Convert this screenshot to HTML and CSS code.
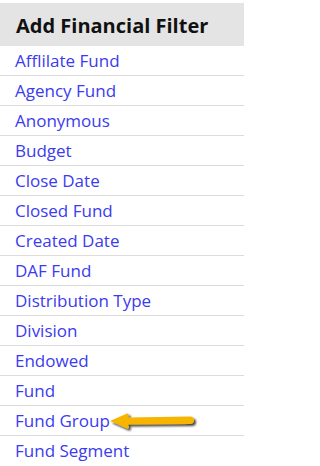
FILE: index.html
```html
<!DOCTYPE html>
<html>
<head>
<meta charset="utf-8">
<link rel="stylesheet" href="styles.css">
</head>
<body>
<div class="panel">
  <div class="header">Add Financial Filter</div>
  <ul class="list">
    <li class="item"><a class="link">Afflilate Fund</a></li>
    <li class="item"><a class="link">Agency Fund</a></li>
    <li class="item"><a class="link">Anonymous</a></li>
    <li class="item"><a class="link">Budget</a></li>
    <li class="item"><a class="link">Close Date</a></li>
    <li class="item"><a class="link">Closed Fund</a></li>
    <li class="item"><a class="link">Created Date</a></li>
    <li class="item"><a class="link">DAF Fund</a></li>
    <li class="item"><a class="link">Distribution Type</a></li>
    <li class="item"><a class="link">Division</a></li>
    <li class="item"><a class="link">Endowed</a></li>
    <li class="item"><a class="link">Fund</a></li>
    <li class="item item-marked"><a class="link">Fund Group</a>
      <svg class="arrow" width="96" height="24" viewBox="0 0 96 24">
        <defs>
          <filter id="sh" x="-10%" y="-40%" width="130%" height="200%">
            <feGaussianBlur in="SourceAlpha" stdDeviation="1"/>
            <feOffset dx="1.5" dy="2" result="b"/>
            <feComponentTransfer><feFuncA type="linear" slope="0.75"/></feComponentTransfer>
            <feMerge><feMergeNode/><feMergeNode in="SourceGraphic"/></feMerge>
          </filter>
        </defs>
        <path filter="url(#sh)" fill="#f8b500" d="M2 9 L19 1.5 Q21 1 21 3 L20 5.5 L82 4.5 Q86 4.5 86 8 Q86 12 82 12 L20 12.5 L21 15 Q21 17 19 16.5 Z"/>
      </svg>
    </li>
    <li class="item"><a class="link">Fund Segment</a></li>
  </ul>
</div>
</body>
</html>
```
FILE: styles.css
```css
html, body {
  margin: 0;
  padding: 0;
  background: #ffffff;
}
.panel {
  width: 244px;
  padding-top: 3px;
  font-family: "Open Sans", "DejaVu Sans", sans-serif;
}
.header {
  background: #e4e4e4;
  height: 43px;
  display: flex;
  align-items: center;
  padding-left: 16px;
  font-size: 20px;
  font-weight: 700;
  color: #111111;
  box-sizing: border-box;
  padding-top: 1px;
  white-space: nowrap;
}
.list {
  list-style: none;
  margin: 0;
  padding: 0;
}
.item {
  height: 30px;
  box-sizing: border-box;
  border-bottom: 1px solid #dcdcdc;
  display: flex;
  align-items: center;
  padding-left: 15px;
  padding-bottom: 1px;
  white-space: nowrap;
}
.item:last-child {
  border-bottom: none;
}
.item-marked {
  position: relative;
}
.link {
  color: #3b3bef;
  font-size: 17px;
  text-decoration: none;
}
.arrow {
  position: absolute;
  left: 108px;
  top: 6px;
}
```
